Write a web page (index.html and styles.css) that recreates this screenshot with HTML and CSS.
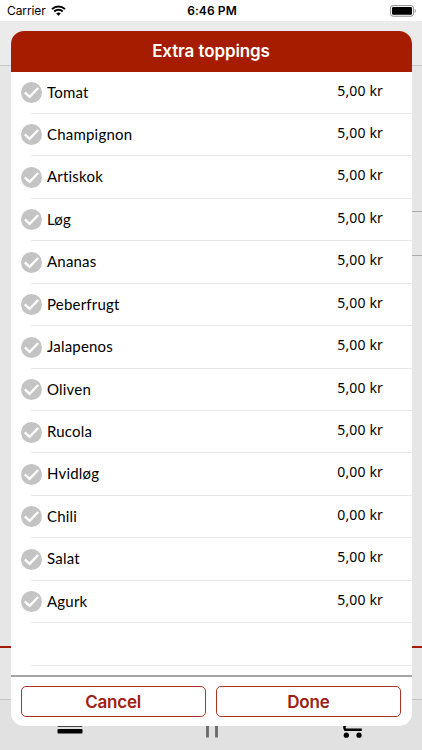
FILE: index.html
```html
<!DOCTYPE html>
<html lang="en">
<head>
    <meta charset="UTF-8">
    <meta name="viewport" content="width=device-width, initial-scale=1.0">
    <title>Extra toppings</title>
    <link rel="stylesheet" href="styles.css">
    <script src="toppings.js" defer></script>
</head>
<body>
    <div class="screen">
        <header class="statusBar">
            <div class="carrier">
                <span class="carrierName">Carrier</span>
                <svg class="wifi" width="15" height="11" viewBox="0 0 15 11">
                    <path d="M1 4.1a9.4 9.4 0 0 1 13 0M3.3 6.5a6.1 6.1 0 0 1 8.4 0" fill="none" stroke="#000" stroke-width="2"/>
                    <path d="M7.5 10.8L5.2 8.5a3.3 3.3 0 0 1 4.6 0z"/>
                </svg>
            </div>
            <span class="clock">6:46 PM</span>
            <svg class="battery" width="27" height="12" viewBox="0 0 27 12">
                <rect x=".6" y=".6" width="22.8" height="10.6" rx="2.4" fill="#fff" stroke="#8c8c8c"/>
                <rect x="2" y="2" width="20" height="7.8" rx="1.2"/>
                <path d="M24.6 4v4c1.6-.6 1.6-3.4 0-4z" fill="#8c8c8c"/>
            </svg>
        </header>

        <div class="navBar"></div>
        <main class="page">
            <div class="field"></div>
        </main>
        <div class="total"></div>
        <nav class="tabBar">
            <svg class="tab" width="26" height="24" viewBox="0 0 26 24">
                <rect x=".5" y="8" width="25" height="5" rx="1" fill="#444"/>
                <rect x=".5" y="15" width="25" height="4.6" rx="1"/>
            </svg>
            <svg class="tab" width="14" height="24" viewBox="0 0 14 24">
                <path d="M1.5 2v21.5M10.5 2v21.5" stroke="#6a6a6a" stroke-width="2.8"/>
            </svg>
            <svg class="tab" width="20" height="24" viewBox="0 0 20 24">
                <path d="M4 10.5c-3 .8-3.2 3-1.8 5.3h16.6" fill="none" stroke="#000" stroke-width="2.4"/>
                <circle cx="3.3" cy="21.2" r="2.6"/>
                <circle cx="16" cy="21.2" r="2.6"/>
            </svg>
        </nav>

        <section class="modal">
            <h1 class="modalTitle">Extra toppings</h1>
            <ul class="toppings"></ul>
            <div class="buttons">
                <button type="button" class="button">Cancel</button>
                <button type="button" class="button">Done</button>
            </div>
        </section>
    </div>
</body>
</html>
```
FILE: styles.css
```css
* {
    box-sizing: border-box;
}

body {
    margin: 0;
    font-family: Inter, "Liberation Sans", sans-serif;
    color: #000;
}

.screen {
    position: relative;
    display: flex;
    flex-direction: column;
    width: 422px;
    height: 750px;
    overflow: hidden;
    background-color: #e6e6e6;
}

.statusBar {
    display: grid;
    grid-template-columns: 1fr auto 1fr;
    align-items: center;
    height: 21px;
    padding: 0 5px 0 7px;
    background-color: #fff;
    font-size: 12px;
}

.carrier {
    display: flex;
    align-items: center;
    gap: 5px;
}

.carrierName {
    letter-spacing: -0.1px;
}

.clock {
    font-weight: 600;
    letter-spacing: 0.1px;
}

.battery {
    justify-self: end;
}

/* page behind the modal */
.navBar {
    height: 45px;
    background-color: #ebebeb;
    border-bottom: 1px solid #c8c8c8;
}

.page {
    flex: 1;
    padding: 145px 0 0 40px;
}

.field {
    height: 45px;
    border-top: 1px solid #aaa;
    border-bottom: 1px solid #aaa;
}

.total {
    height: 54px;
    border-top: 2px solid #a51c00;
    border-bottom: 1px solid #c4c4c4;
}

.tabBar {
    display: flex;
    justify-content: space-between;
    height: 50px;
    padding: 14px 59px 0 57px;
    background-color: #e1e1e1;
}

/* modal */
.modal {
    position: absolute;
    top: 31px;
    left: 10.5px;
    display: flex;
    flex-direction: column;
    width: 401px;
    height: 695px;
    overflow: hidden;
    border-radius: 13px;
    background-color: #fff;
}

.modalTitle {
    height: 40.5px;
    margin: 0;
    background-color: #a51c00;
    color: #fff;
    font-size: 17px;
    font-weight: 600;
    letter-spacing: -0.1px;
    line-height: 41px;
    text-align: center;
}

.toppings {
    flex: 1;
    margin: 0;
    padding: 0;
    list-style: none;
}

.topping {
    display: flex;
    height: 42.45px;
    padding-left: 10px;
}

.check {
    flex: none;
    width: 21px;
    height: 21px;
    margin-top: 10.5px;
}

.details {
    display: flex;
    flex: 1;
    justify-content: space-between;
    margin-left: -11px;
    padding: 0 28.5px 0 16.5px;
    border-bottom: 1px solid #e8e8e8;
}

.name {
    font-family: Lato, sans-serif;
    font-size: 15px;
    font-variant-ligatures: none;
    letter-spacing: 0.2px;
    line-height: 40.5px;
}

.price {
    font-family: "Noto Sans", sans-serif;
    font-size: 14px;
    letter-spacing: 0.15px;
    line-height: 37.5px;
}

.buttons {
    display: flex;
    gap: 10px;
    height: 51px;
    padding: 9px 10.5px 9px 10px;
    border-top: 2px solid #a3a5a3;
}

.button {
    flex: 1;
    padding: 0;
    border: 1px solid #a93424;
    border-radius: 5px;
    background-color: #fff;
    color: #9d2011;
    font-family: inherit;
    font-size: 17px;
    font-weight: 600;
    letter-spacing: -0.2px;
}
```
FILE: toppings.js
```javascript
let toppings = [
    { name: "Tomat", price: "5,00 kr" },
    { name: "Champignon", price: "5,00 kr" },
    { name: "Artiskok", price: "5,00 kr" },
    { name: "Løg", price: "5,00 kr" },
    { name: "Ananas", price: "5,00 kr" },
    { name: "Peberfrugt", price: "5,00 kr" },
    { name: "Jalapenos", price: "5,00 kr" },
    { name: "Oliven", price: "5,00 kr" },
    { name: "Rucola", price: "5,00 kr" },
    { name: "Hvidløg", price: "0,00 kr" },
    { name: "Chili", price: "0,00 kr" },
    { name: "Salat", price: "5,00 kr" },
    { name: "Agurk", price: "5,00 kr" }
];

let checkIcon = `<svg class="check" viewBox="0 0 21 21">
    <circle cx="10.5" cy="10.5" r="10.5" fill="#c4c4c4"/>
    <path d="M3.8 10.4l4.8 4.4 8.6-8.8" fill="none" stroke="#fff" stroke-width="2.4"/>
</svg>`;

let rows = "";
for (let topping of toppings) {
    rows += `<li class="topping">${checkIcon}
        <div class="details">
            <span class="name">${topping.name}</span>
            <span class="price">${topping.price}</span>
        </div>
    </li>`;
}
//empty row at the end of the list
rows += `<li class="topping"><div class="check"></div><div class="details"></div></li>`;

document.querySelector(".toppings").innerHTML = rows;
```
